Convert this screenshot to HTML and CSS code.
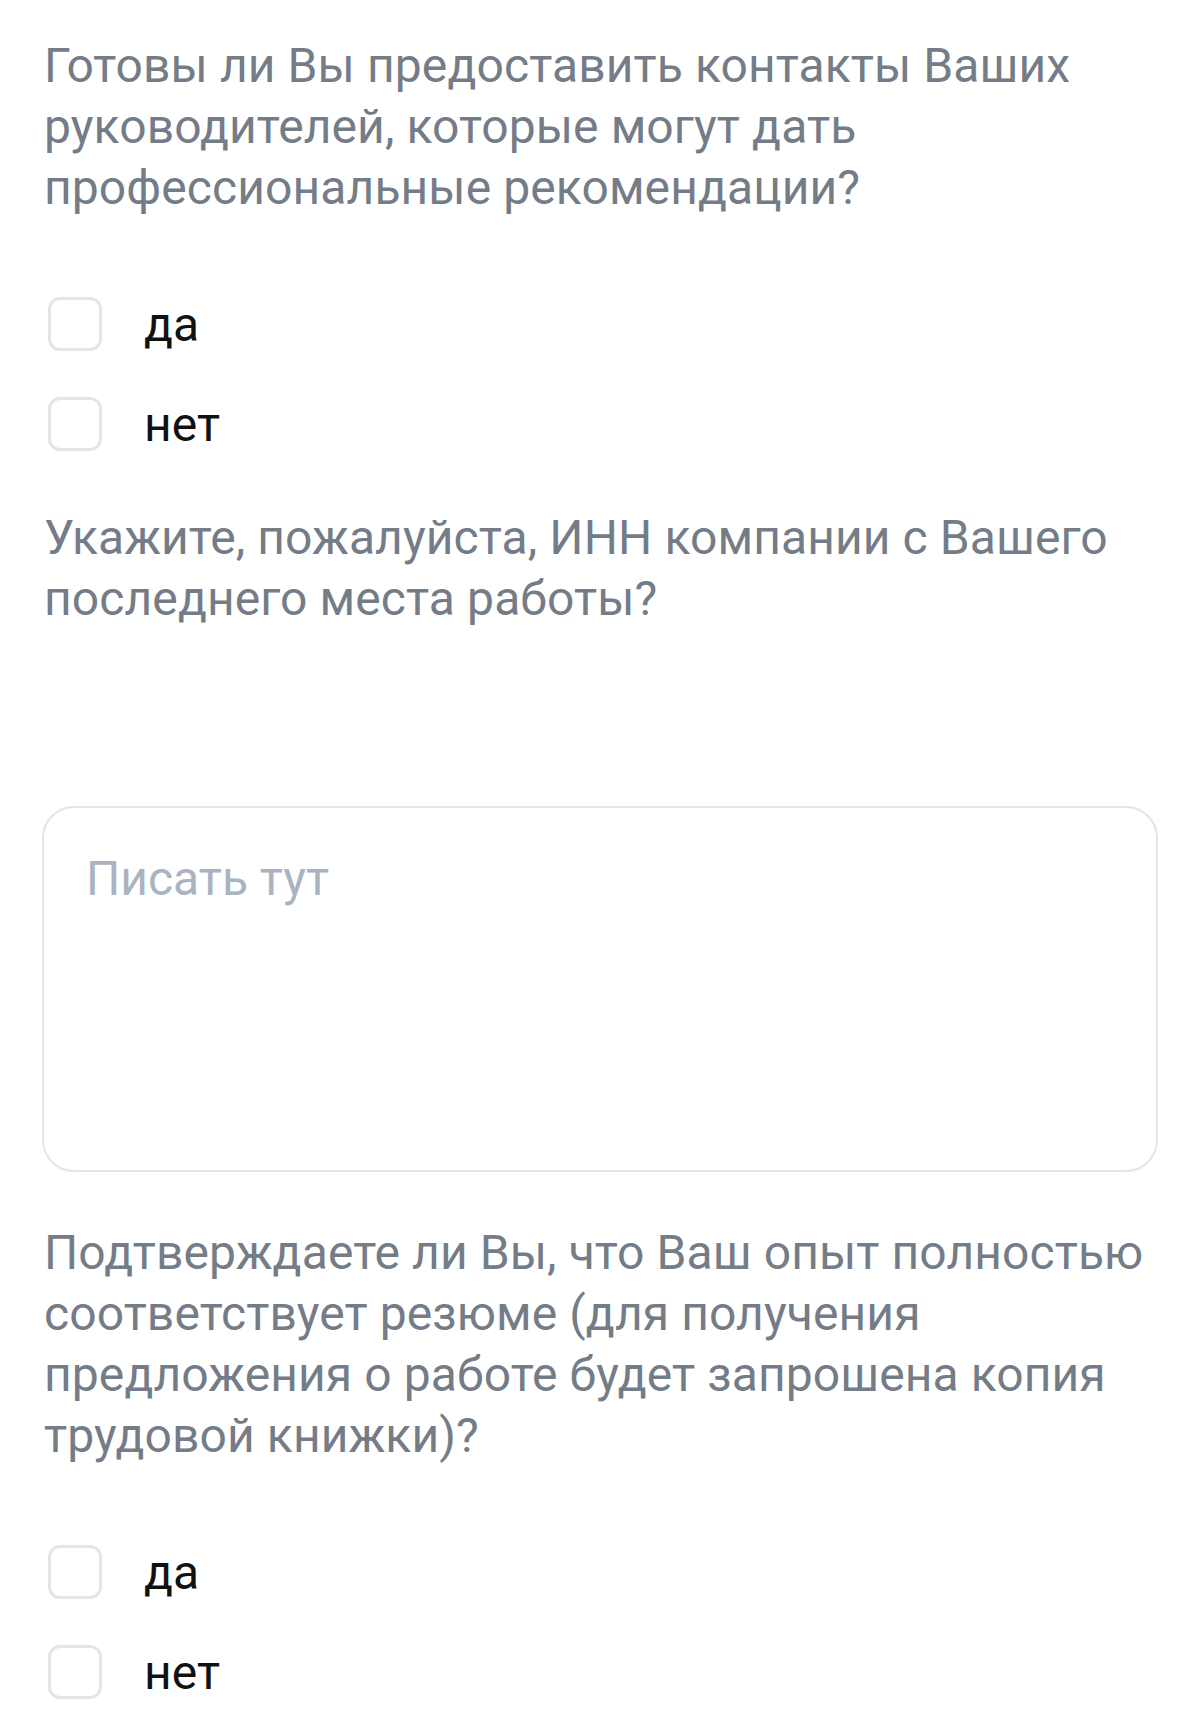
FILE: index.html
```html
<!DOCTYPE html>
<html lang="ru">
<head>
<meta charset="utf-8">
<title>Анкета</title>
<link rel="stylesheet" href="styles.css">
</head>
<body>
<main class="form">
  <section class="question">
    <p class="q-text">Готовы ли Вы предоставить контакты Ваших<br>руководителей, которые могут дать<br>профессиональные рекомендации?</p>
    <div class="options">
      <label class="option"><span class="box"></span><span class="opt-label">да</span></label>
      <label class="option"><span class="box"></span><span class="opt-label">нет</span></label>
    </div>
  </section>

  <section class="question">
    <p class="q-text">Укажите, пожалуйста, ИНН компании с Вашего<br>последнего места работы?</p>
    <div class="field">
      <div class="textarea"><span class="placeholder">Писать тут</span></div>
    </div>
  </section>

  <section class="question">
    <p class="q-text">Подтверждаете ли Вы, что Ваш опыт полностью<br>соответствует резюме (для получения<br>предложения о работе будет запрошена копия<br>трудовой книжки)?</p>
    <div class="options">
      <label class="option"><span class="box"></span><span class="opt-label">да</span></label>
      <label class="option"><span class="box"></span><span class="opt-label">нет</span></label>
    </div>
  </section>
</main>
</body>
</html>
```

FILE: styles.css
```css
* { box-sizing: border-box; }
html, body { margin: 0; padding: 0; background: #ffffff; }
body {
  font-family: Roboto, "Liberation Sans", Arial, sans-serif;
  font-size: 48px;
  line-height: 61px;
}
.form {
  padding: 35px 42px 0 42px;
  display: flex;
  flex-direction: column;
}
.q-text {
  margin: 0 0 0 2px;
  color: #747c88;
  font-size: 48px;
  line-height: 61px;
  letter-spacing: 0.1px;
}
.options {
  display: flex;
  flex-direction: column;
  gap: 46px;
  padding: 79px 0 56px 6px;
}
.option {
  display: flex;
  align-items: center;
  gap: 42px;
  height: 54px;
}
.box {
  width: 54px;
  height: 54px;
  flex: none;
  border: 3px solid #e3e5e9;
  border-radius: 12px;
  background: #fff;
}
.opt-label {
  color: #111111;
  line-height: 61px;
}
.field {
  padding: 177px 0 50px 0;
}
.textarea {
  height: 366px;
  border: 2px solid #e1e4e8;
  border-radius: 32px;
  padding: 40px 42px;
}
.placeholder {
  color: #aab3c0;
  line-height: 61px;
}
```
